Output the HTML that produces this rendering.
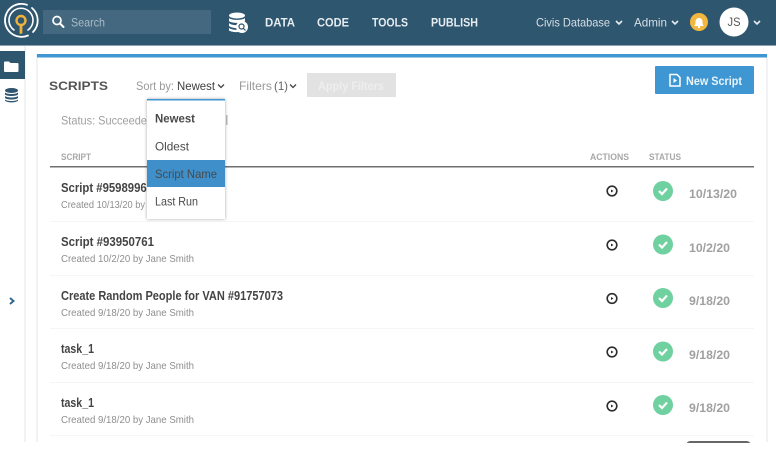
<!DOCTYPE html>
<html lang="en">
<head>
<meta charset="utf-8">
<title>Scripts</title>
<style>
html,body{margin:0;padding:0;background:#fff;width:776px;height:451px;overflow:hidden}
svg{display:block;filter:blur(.35px)}
text{font-family:"Liberation Sans",Arial,sans-serif;font-size:12px}
.t{font-weight:700;fill:#444;font-size:12.5px}
.s{fill:#8e8e8e;font-size:10.5px}
.d{font-weight:700;fill:#a0a0a0;font-size:12px}
.h{font-weight:700;fill:#a8a8a8;font-size:9px}
.n{fill:#e6edf1;font-size:12px;font-weight:700}
.m{fill:#4a4a4a;font-size:12px}
</style>
</head>
<body>
<svg width="776" height="451" viewBox="0 0 776 451" xmlns="http://www.w3.org/2000/svg">
<rect width="776" height="451" fill="#fff"/>
<!-- header -->
<rect width="776" height="45" fill="#2f566f"/>
<rect y="45" width="776" height="1" fill="#8ba3b2"/>
<!-- logo -->
<g fill="none" stroke-linecap="round">
<path d="M27 4.800A16.500 16.500 0 1 0 28 35.500" stroke="#fff" stroke-width="1.800"/>
<path d="M32 8A16.500 16.500 0 0 1 33 32" stroke="#fff" stroke-width="1.800"/>
<path d="M14 30A12 12 0 1 1 28 30" stroke="#fff" stroke-width="1.600"/>
<circle cx="21" cy="20.500" r="4.500" stroke="#f0b23c" stroke-width="2.400"/>
<path d="M21 25.500V32.500" stroke="#f0b23c" stroke-width="2.800"/>
</g>
<!-- search -->
<rect x="43" y="10" width="168" height="24" fill="#44687f"/>
<circle cx="57" cy="20.500" r="4" fill="none" stroke="#fff" stroke-width="1.700"/>
<path d="M60 23.500L63.500 27" stroke="#fff" stroke-width="2" stroke-linecap="round"/>
<text x="71" y="26.500" fill="#a9bcc8" font-size="12" textLength="34" lengthAdjust="spacingAndGlyphs">Search</text>
<!-- db icon -->
<g fill="#fff">
<ellipse cx="237" cy="15.500" rx="8" ry="3"/>
<path d="M229 18c2 2.500 14 2.500 16 0v3c-2 2.500-14 2.500-16 0z"/>
<path d="M229 23c2 2.500 10 2.500 11 2l-1 3c-4 .5-8-.5-10-2z"/>
<path d="M229 28c2 1.500 6 2 9 2l1 2c-4 .5-8-.3-10-1.500z"/>
<circle cx="242" cy="27" r="6"/>
</g>
<circle cx="241.500" cy="26.500" r="2.500" fill="none" stroke="#2f566f" stroke-width="1.200"/>
<path d="M243.500 28.500L245.500 30.500" stroke="#2f566f" stroke-width="1.200"/>
<!-- nav -->
<text class="n" x="265" y="26.500" textLength="30" lengthAdjust="spacingAndGlyphs">DATA</text>
<text class="n" x="317" y="26.500" textLength="32" lengthAdjust="spacingAndGlyphs">CODE</text>
<text class="n" x="372" y="26.500" textLength="36" lengthAdjust="spacingAndGlyphs">TOOLS</text>
<text class="n" x="431" y="26.500" textLength="47" lengthAdjust="spacingAndGlyphs">PUBLISH</text>
<text x="536" y="26.500" fill="#d5dfe5" textLength="74" lengthAdjust="spacingAndGlyphs">Civis Database</text>
<path d="M616 21l3 3 3-3" fill="none" stroke="#e6edf1" stroke-width="1.600"/>
<text x="634" y="26.500" fill="#d5dfe5" textLength="33" lengthAdjust="spacingAndGlyphs">Admin</text>
<path d="M672 21l3 3 3-3" fill="none" stroke="#e6edf1" stroke-width="1.600"/>
<circle cx="699" cy="22" r="9" fill="#f2b73f"/>
<path d="M694 26c1.500-1 1.500-2.500 1.500-4.500a3.500 3.500 0 0 1 7 0c0 2 0 3.500 1.500 4.500z" fill="#fff"/>
<circle cx="699" cy="27" r="1.200" fill="#fff"/>
<circle cx="734" cy="22" r="14.500" fill="#fff"/>
<text x="727.500" y="26" fill="#555" font-size="11" textLength="13" lengthAdjust="spacingAndGlyphs">JS</text>
<path d="M754 21l3 3 3-3" fill="none" stroke="#e6edf1" stroke-width="1.600"/>
<!-- sidebar -->
<rect x="24" y="46" width="2" height="396" fill="#f1f2f3"/>
<rect x="0" y="51" width="25" height="28" fill="#2f566f"/>
<path d="M4 62.500a1 1 0 0 1 1-1h4l1.500 1.500h7a1 1 0 0 1 1 1v7a1 1 0 0 1-1 1H5a1 1 0 0 1-1-1z" fill="#fff"/>
<g fill="#2f566f">
<ellipse cx="11.500" cy="90.500" rx="6.500" ry="2.500"/>
<path d="M5 92.500c1.500 2 11.500 2 13 0v2c-1.500 2-11.500 2-13 0z"/>
<path d="M5 96c1.500 2 11.500 2 13 0v2c-1.500 2-11.500 2-13 0z"/>
<path d="M5 99.500c1.500 2 11.500 2 13 0v1c-1.500 2.500-11.500 2.500-13 0z"/>
</g>
<path d="M10 298l3.500 3-3.500 3" fill="none" stroke="#2f6a8f" stroke-width="2"/>
<!-- panel -->
<rect x="36" y="54" width="2" height="388" fill="#f1f2f3"/>
<rect x="766" y="54" width="2" height="388" fill="#f1f2f3"/>
<rect x="37" y="54" width="730" height="3.500" fill="#3e97d3"/>
<text x="49" y="90" font-size="16.500" font-weight="700" fill="#555" textLength="59" lengthAdjust="spacingAndGlyphs">SCRIPTS</text>
<text x="136" y="90" fill="#9a9a9a" textLength="38" lengthAdjust="spacingAndGlyphs">Sort by:</text>
<text x="177" y="90" fill="#3f3f3f" textLength="38" lengthAdjust="spacingAndGlyphs">Newest</text>
<path d="M218 84.500l3 3 3-3" fill="none" stroke="#444" stroke-width="1.300"/>
<text x="239" y="90" fill="#9a9a9a" textLength="33" lengthAdjust="spacingAndGlyphs">Filters</text>
<text x="274" y="90" fill="#666" textLength="14" lengthAdjust="spacingAndGlyphs">(1)</text>
<path d="M290 84.500l3 3 3-3" fill="none" stroke="#444" stroke-width="1.300"/>
<rect x="307" y="73" width="89" height="24" fill="#e2e2e2"/>
<text x="318" y="90" fill="#eeeeee" font-weight="700" textLength="66" lengthAdjust="spacingAndGlyphs">Apply Filters</text>
<rect x="655" y="66" width="99" height="28" rx="1" fill="#3e97d3"/>
<path d="M670 74.500h7l3 3v8.500h-10z" fill="none" stroke="#fff" stroke-width="1.500"/>
<path d="M673.500 78l3.500 2.500-3.500 2.500z" fill="#fff"/>
<text x="686" y="85" fill="#e8f3fa" font-weight="700" textLength="56" lengthAdjust="spacingAndGlyphs">New Script</text>
<text x="61" y="124.500" fill="#a0a0a0" textLength="92" lengthAdjust="spacingAndGlyphs">Status: Succeeded</text>
<rect x="226" y="115" width="1.500" height="10" fill="#bbb"/>
<!-- table head -->
<text class="h" x="61" y="160" textLength="30" lengthAdjust="spacingAndGlyphs">SCRIPT</text>
<text class="h" x="590" y="160" textLength="39" lengthAdjust="spacingAndGlyphs">ACTIONS</text>
<text class="h" x="649" y="160" textLength="32" lengthAdjust="spacingAndGlyphs">STATUS</text>
<rect x="50" y="166" width="704" height="1.500" fill="#6f6f6f"/>
<!-- rows -->
<g fill="#f6f6f6">
<rect x="50" y="221" width="704" height="1"/>
<rect x="50" y="275" width="704" height="1"/>
<rect x="50" y="328" width="704" height="1"/>
<rect x="50" y="382" width="704" height="1"/>
<rect x="50" y="435" width="704" height="1"/>
</g>
<text class="t" x="61" y="192" textLength="92" lengthAdjust="spacingAndGlyphs">Script #95989961</text>
<text class="s" x="61" y="208" textLength="133" lengthAdjust="spacingAndGlyphs">Created 10/13/20 by Jane Smith</text>
<text class="t" x="61" y="246" textLength="93" lengthAdjust="spacingAndGlyphs">Script #93950761</text>
<text class="s" x="61" y="262" textLength="133" lengthAdjust="spacingAndGlyphs">Created 10/2/20 by Jane Smith</text>
<text class="t" x="61" y="300" textLength="222" lengthAdjust="spacingAndGlyphs">Create Random People for VAN #91757073</text>
<text class="s" x="61" y="316" textLength="133" lengthAdjust="spacingAndGlyphs">Created 9/18/20 by Jane Smith</text>
<text class="t" x="61" y="353" textLength="33" lengthAdjust="spacingAndGlyphs">task_1</text>
<text class="s" x="61" y="369" textLength="133" lengthAdjust="spacingAndGlyphs">Created 9/18/20 by Jane Smith</text>
<text class="t" x="61" y="407" textLength="33" lengthAdjust="spacingAndGlyphs">task_1</text>
<text class="s" x="61" y="423" textLength="133" lengthAdjust="spacingAndGlyphs">Created 9/18/20 by Jane Smith</text>
<!-- action icons -->
<g fill="none" stroke="#2c2c2c" stroke-width="1.600">
<circle cx="612" cy="191" r="4.800"/>
<circle cx="612" cy="245" r="4.800"/>
<circle cx="612" cy="298.500" r="4.800"/>
<circle cx="612" cy="352" r="4.800"/>
<circle cx="612" cy="406" r="4.800"/>
</g>
<g fill="#2c2c2c">
<path d="M611 189.500l2.500 1.500-2.500 1.500z"/>
<path d="M611 243.500l2.500 1.500-2.500 1.500z"/>
<path d="M611 297l2.500 1.500-2.500 1.500z"/>
<path d="M611 350.500l2.500 1.500-2.500 1.500z"/>
<path d="M611 404.500l2.500 1.500-2.500 1.500z"/>
</g>
<!-- status icons -->
<g fill="#6fd0a0">
<circle cx="663" cy="191" r="10"/>
<circle cx="663" cy="244.500" r="10"/>
<circle cx="663" cy="298" r="10"/>
<circle cx="663" cy="351.500" r="10"/>
<circle cx="663" cy="405" r="10"/>
</g>
<g fill="none" stroke="#fff" stroke-width="2.200">
<path d="M659 191l3 3 5-5.500"/>
<path d="M659 244.500l3 3 5-5.500"/>
<path d="M659 298l3 3 5-5.500"/>
<path d="M659 351.500l3 3 5-5.500"/>
<path d="M659 405l3 3 5-5.500"/>
</g>
<text class="d" x="689" y="198" textLength="48" lengthAdjust="spacingAndGlyphs">10/13/20</text>
<text class="d" x="689" y="252" textLength="41" lengthAdjust="spacingAndGlyphs">10/2/20</text>
<text class="d" x="689" y="305" textLength="41" lengthAdjust="spacingAndGlyphs">9/18/20</text>
<text class="d" x="689" y="359" textLength="41" lengthAdjust="spacingAndGlyphs">9/18/20</text>
<text class="d" x="689" y="412" textLength="41" lengthAdjust="spacingAndGlyphs">9/18/20</text>
<path d="M687 443c0-1 2-2 4-2h55c2 0 4 1 4 2z" fill="#666"/>
<!-- dropdown -->
<rect x="147" y="99" width="78" height="120" fill="#fff" style="filter:drop-shadow(0 .5px 1.500px rgba(0,0,0,.35))"/>
<rect x="147" y="99" width="78" height="1.500" fill="#3e97d3"/>
<text class="m" x="155" y="122.500" font-weight="700" fill="#3f3f3f" textLength="40" lengthAdjust="spacingAndGlyphs">Newest</text>
<text class="m" x="155" y="150.500" textLength="34" lengthAdjust="spacingAndGlyphs">Oldest</text>
<rect x="147" y="160" width="78" height="27" fill="#3e8fca"/>
<text class="m" x="155" y="178" fill="#2f4a5e" textLength="62" lengthAdjust="spacingAndGlyphs">Script Name</text>
<text class="m" x="155" y="205.500" textLength="43" lengthAdjust="spacingAndGlyphs">Last Run</text>
</svg>
</body>
</html>
